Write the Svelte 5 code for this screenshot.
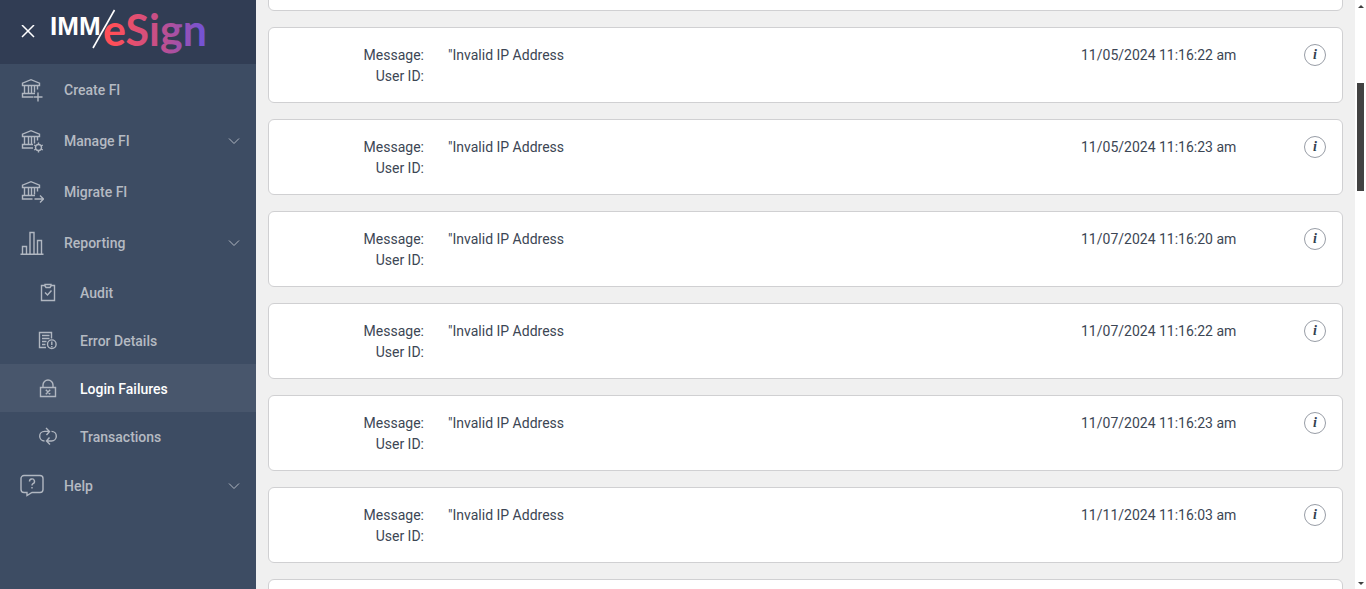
<script>
  let activePage = $state('Login Failures');
  let list;

  const nav = [
    { label: 'Create FI', icon: 'create' },
    { label: 'Manage FI', icon: 'manage', expandable: true },
    { label: 'Migrate FI', icon: 'migrate' },
    {
      label: 'Reporting',
      icon: 'reporting',
      expandable: true,
      children: [
        { label: 'Audit', icon: 'audit' },
        { label: 'Error Details', icon: 'errors' },
        { label: 'Login Failures', icon: 'login' },
        { label: 'Transactions', icon: 'transactions' },
      ],
    },
    { label: 'Help', icon: 'help', expandable: true },
  ];

  const failures = [
    '11/05/2024 11:16:20 am',
    '11/05/2024 11:16:22 am',
    '11/05/2024 11:16:23 am',
    '11/07/2024 11:16:20 am',
    '11/07/2024 11:16:22 am',
    '11/07/2024 11:16:23 am',
    '11/11/2024 11:16:03 am',
    '11/11/2024 11:16:05 am',
  ].map((date) => ({ date, message: '"Invalid IP Address', userId: '' }));

  // Start part way down the list
  $effect(() => {
    list.scrollTop = 81;
  });
</script>

{#snippet icon(name)}
  <svg class="icon" viewBox="0 0 24 24" width="24" height="24" aria-hidden="true">
    {#if name === 'create' || name === 'manage' || name === 'migrate'}
      <path d="M2.5 7.5V5.2L11 1.7l8.5 3.5v2.3zM4.5 7.5v8M8.5 7.5v8M11.5 7.5v8M14.5 7.5v7M17.5 7.5v4" />
      {#if name === 'create'}
        <path d="M15 15.5H2.5v3.5H13M18 14.5v9M13.5 19h9" />
      {:else if name === 'manage'}
        <path d="M13 15.5H2.5v3.5H13" />
        <circle cx="18.5" cy="18.5" r="3" />
        <path d="M18.5 13.5v2M18.5 21.5v2M14.2 16l1.7 1M21.1 20l1.7 1M14.2 21l1.7-1M21.1 17l1.7-1" />
      {:else}
        <path d="M15 15.5H2.5v3.5H12.5M14.5 19h9M20 15.5l3.5 3.5-3.5 3.5" />
      {/if}
    {:else if name === 'reporting'}
      <path d="M.5 23.2h23M2.5 23v-7.5h4V23M10 23V1.5h4V23M17.5 23V9.5h4V23" />
    {:else if name === 'audit'}
      <path d="M9 5.5H5.5v15h13v-15H15M9 4.5h6v1.5l-1 1.5h-4L9 6zM9 12.5l2.5 2.5 4-4.5" />
    {:else if name === 'errors'}
      <path d="M10 19.5H3.5v-15h12v6M6 7.5h7.5M6 10.5h7.5M6 13.5h4.5M6 16.5h3.5" />
      <circle cx="15.8" cy="16.2" r="4.3" />
      <path d="M15.8 13.5v3.5M15.8 18v1.2" />
    {:else if name === 'login'}
      <path d="M4.5 11.5h15v9h-15zM7 11.5V9a5 5 0 0 1 10 0v2.5M9.8 13.8l4.4 4.4M14.2 13.8l-4.4 4.4" />
    {:else if name === 'transactions'}
      <path d="M8.5 17A4.8 4.8 0 0 1 8.5 7.4H13.5M10 4l3.5 3.5L10.5 11M15.5 7.4A4.8 4.8 0 0 1 15.5 17H10.5M14 20.4L10.5 17l3-3.5" />
    {:else if name === 'help'}
      <path d="M4 1.5h16a3 3 0 0 1 3 3v11a3 3 0 0 1-3 3h-8L7 21.5v-3H4a3 3 0 0 1-3-3v-11a3 3 0 0 1 3-3z" />
      <path d="M9.5 7.5a2.5 2.5 0 1 1 3.5 2.2q-1 .6-1 1.8M12 13v1.5" />
    {/if}
  </svg>
{/snippet}

{#snippet item(entry, nested)}
  <a
    href="#{entry.icon}"
    class="nav-link"
    class:nested
    class:active={entry.label === activePage}
    onclick={() => (activePage = entry.label)}
  >
    {@render icon(entry.icon)}
    <span class="nav-label">{entry.label}</span>
    {#if entry.expandable}
      <svg class="chevron" viewBox="0 0 12 8" width="12" height="8" aria-hidden="true">
        <path d="M1 1.5l5 5 5-5" />
      </svg>
    {/if}
  </a>
{/snippet}

<div class="app">
  <aside class="sidebar">
    <header class="brand">
      <button class="close" type="button" aria-label="Close menu">
        <svg viewBox="0 0 14 14" width="14" height="14" aria-hidden="true">
          <path d="M1 0l12 12M13 0L1 12" />
        </svg>
      </button>
      <svg class="logo" viewBox="0 0 160 64" width="160" height="64" role="img" aria-label="IMM/eSign">
        <defs>
          <linearGradient id="brand-fade" gradientUnits="userSpaceOnUse" x1="62" y1="0" x2="157" y2="0">
            <stop offset="0" stop-color="#ff4f58" />
            <stop offset="0.5" stop-color="#c24f8c" />
            <stop offset="1" stop-color="#6a54dc" />
          </linearGradient>
        </defs>
        <text class="logo-imm" x="-1" y="35">IMM</text>
        <path class="logo-slash" d="M42 48L63.5 10" />
        <text class="logo-esign" x="52" y="46">eSign</text>
      </svg>
    </header>

    <nav>
      <ul>
        {#each nav as entry}
          <li>
            {@render item(entry, false)}
            {#if entry.children}
              <ul>
                {#each entry.children as child}
                  <li>{@render item(child, true)}</li>
                {/each}
              </ul>
            {/if}
          </li>
        {/each}
      </ul>
    </nav>
  </aside>

  <main class="list" bind:this={list}>
    {#each failures as failure}
      <article class="card">
        <dl class="fields">
          <dt>Message:</dt>
          <dd>{failure.message}</dd>
          <dt>User ID:</dt>
          <dd>{failure.userId}</dd>
        </dl>
        <time class="date">{failure.date}</time>
        <button class="info" type="button" aria-label="Details">i</button>
      </article>
    {/each}
  </main>

  <div class="scrollbar" aria-hidden="true">
    <svg viewBox="0 0 6 4" width="6" height="4"><path d="M3 0l3 3H0z" /></svg>
    <div class="track">
      <div class="thumb"></div>
    </div>
    <svg viewBox="0 0 6 4" width="6" height="4"><path d="M3 3l3-3H0z" /></svg>
  </div>
</div>

<style>
  :global(body) {
    margin: 0;
    background: #f0f0f0;
  }

  .app {
    display: grid;
    grid-template-columns: 256px 1fr 11px;
    height: 100vh;
    overflow: hidden;
    font-family: Roboto, 'Liberation Sans', sans-serif;
    font-size: 14px;
    line-height: 21px;
    color: #3c4654;
  }

  .sidebar {
    background: #3d4c63;
  }

  .brand {
    display: flex;
    align-items: center;
    gap: 16px;
    height: 64px;
    padding-left: 21px;
    background: #313d54;
  }

  .close {
    display: flex;
    padding: 0;
    border: 0;
    background: none;
    cursor: pointer;
  }

  .close path {
    fill: none;
    stroke: #fff;
    stroke-width: 1.5;
  }

  .logo {
    overflow: visible;
  }

  .logo-imm {
    font: 700 26px 'Liberation Sans', sans-serif;
    fill: #fff;
  }

  .logo-slash {
    stroke: #fff;
    stroke-width: 1.6;
  }

  .logo-esign {
    font: 700 43px Lato, sans-serif;
    fill: url(#brand-fade);
  }

  ul {
    margin: 0;
    padding: 0;
    list-style: none;
  }

  .nav-link {
    display: flex;
    align-items: center;
    gap: 20px;
    height: 51px;
    padding: 0 16px 0 20px;
    font-weight: 500;
    color: #b5bac2;
    text-decoration: none;
  }

  .nav-link.nested {
    height: 48px;
    padding-left: 36px;
  }

  .nav-link.active {
    background: #48566c;
    color: #fff;
  }

  .nav-label {
    flex: 1;
    padding-top: 2px;
  }

  .icon,
  .chevron {
    flex: none;
    fill: none;
    stroke: #b1b7c1;
    stroke-width: 1.4;
  }

  .chevron {
    stroke-width: 1;
  }

  .list {
    display: flex;
    flex-direction: column;
    gap: 16px;
    padding: 16px 12px;
    overflow-y: auto;
    scrollbar-width: none;
  }

  .card {
    display: flex;
    flex: none;
    align-items: flex-start;
    padding: 16px 16px 15px;
    border: 1px solid #d0d0d2;
    border-radius: 6px;
    background: #fff;
  }

  .fields {
    display: grid;
    flex: 1;
    grid-template-columns: 139px 1fr;
    column-gap: 24px;
    margin: 0;
  }

  .fields,
  .date {
    padding-top: 1px;
  }

  dt {
    text-align: right;
  }

  dd {
    margin: 0;
  }

  .date {
    width: 223px;
  }

  .info {
    width: 22px;
    height: 22px;
    padding: 0;
    border: 1px solid #989da6;
    border-radius: 50%;
    background: #fff;
    font: italic 700 14px/20px 'Liberation Serif', serif;
    color: #333f50;
    cursor: pointer;
  }

  .scrollbar {
    display: flex;
    flex-direction: column;
    align-items: center;
    justify-content: space-between;
    padding: 5px 0 3px;
    background: #fff;
  }

  .scrollbar svg {
    fill: #404040;
  }

  .track {
    flex: 1;
    width: 7px;
    padding-top: 74px;
  }

  .thumb {
    height: 108px;
    background: #424242;
  }
</style>
